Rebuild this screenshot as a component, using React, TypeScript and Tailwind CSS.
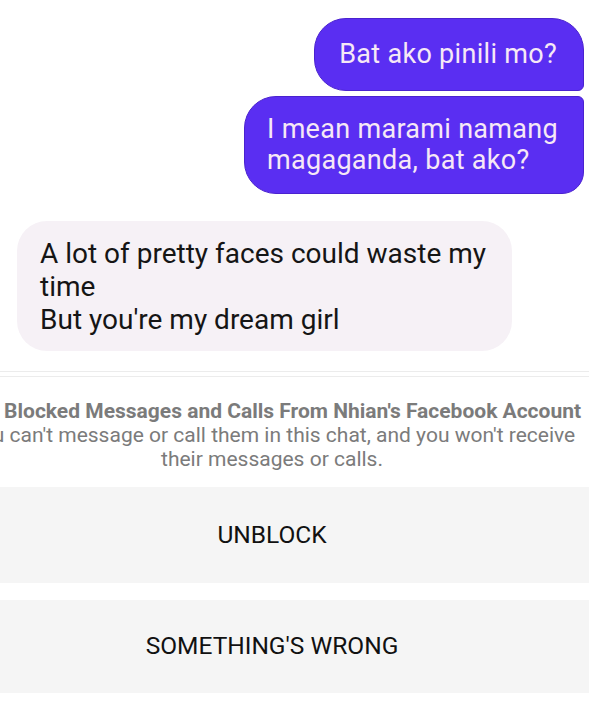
import React from "react";

export default function App() {
  return (
    <div
      className="w-[589px] h-[707px] overflow-hidden bg-white flex flex-col"
      style={{ fontFamily: "Roboto, 'Noto Sans', Arial, sans-serif" }}
    >
      <div className="flex flex-col items-end pr-[5px] pt-[18px] gap-[5px]">
        <div className="bg-[#5a2ef2] border border-[#4a22cf] text-[#f6e8f6] text-[27px] tracking-[0.3px] leading-[31px] whitespace-nowrap pl-[24px] pr-[26px] py-[20px] rounded-tl-[32px] rounded-bl-[32px] rounded-tr-[32px] rounded-br-[6px]">
          Bat ako pinili mo?
        </div>
        <div className="bg-[#5a2ef2] border border-[#4a22cf] text-[#f6e8f6] text-[27px] tracking-[0.3px] leading-[31px] whitespace-nowrap pl-[22px] pr-[22px] py-[17px] rounded-tl-[32px] rounded-bl-[32px] rounded-tr-[6px] rounded-br-[22px] w-[340px]">
          I mean marami namang
          <br />
          magaganda, bat ako?
        </div>
      </div>

      <div className="pl-[17px] mt-[27px]">
        <div className="w-[495px] bg-[#f6f1f6] text-[#151515] text-[28px] leading-[33px] whitespace-nowrap pl-[23px] pr-[20px] pt-[16px] pb-[15px] rounded-[30px]">
          A lot of pretty faces could waste my
          <br />
          time
          <br />
          But you're my dream girl
        </div>
      </div>

      <div className="mt-[20px] h-[6px] border-t border-b border-[#ececec]" />

      <div className="w-[544px] flex flex-col items-center mt-[22px] text-[#7b7b7b] text-[21px] leading-[24px]">
        <div className="whitespace-nowrap font-bold shrink-0">
          You Blocked Messages and Calls From Nhian's Facebook Account
        </div>
        <div className="whitespace-nowrap shrink-0">
          You can't message or call them in this chat, and you won't receive
        </div>
        <div className="whitespace-nowrap shrink-0">their messages or calls.</div>
      </div>

      <div className="mt-[16px] h-[96px] bg-[#f5f5f5] flex items-center justify-center pr-[45px] text-[24.5px] text-[#111]">
        UNBLOCK
      </div>
      <div className="mt-[17px] h-[93px] bg-[#f5f5f5] flex items-center justify-center pr-[45px] text-[24.5px] text-[#111]">
        SOMETHING'S WRONG
      </div>
    </div>
  );
}
